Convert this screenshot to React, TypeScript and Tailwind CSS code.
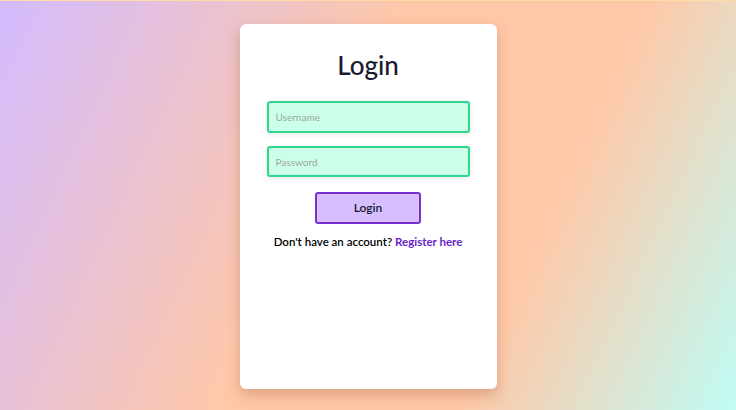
import React from 'react';

export default function App() {
  return (
    <div
      className="w-[736px] h-[410px] flex justify-center items-start pt-[23px] border-t border-[#ffdca6] bg-[linear-gradient(115deg,#d3bbff_0%,#ffc8a8_45%,#ffc8a8_70%,#bffcf5_100%)]"
      style={{ fontFamily: 'Lato, "Noto Sans", sans-serif' }}
    >
      {/* Carte */}
      <div className="w-[257px] h-[365px] bg-white rounded-[6px] shadow-[0_6px_14px_rgba(160,90,50,0.35)] flex flex-col items-center px-[27px] pt-[25px]">
        <h1 className="text-[26px] leading-[33px] font-medium text-[#1b1b2f]">Login</h1>

        <input
          placeholder="Username"
          className="mt-[19px] w-full h-[32px] px-[7px] text-[10px] bg-[#ccffea] border-2 border-[#2fd68e] rounded-[3px] shadow-[0_2px_6px_rgba(0,0,0,0.08)] placeholder:text-[#9aa5a0] outline-none"
        />
        <input
          placeholder="Password"
          type="password"
          className="mt-[13px] w-full h-[31px] px-[7px] text-[10px] bg-[#ccffea] border-2 border-[#2fd68e] rounded-[3px] shadow-[0_2px_6px_rgba(0,0,0,0.08)] placeholder:text-[#9aa5a0] outline-none"
        />

        <button className="mt-[15px] w-[106px] h-[32px] bg-[#d6bfff] border-2 border-[#7b2fd0] rounded-[3px] text-[12px] font-semibold text-[#1b1b2f]">
          Login
        </button>

        <p className="mt-[9px] text-[11.5px] font-semibold text-black whitespace-nowrap">
          Don&apos;t have an account?{' '}
          <a href="#" className="text-[#6a1fc8] font-bold">
            Register here
          </a>
        </p>
      </div>
    </div>
  );
}
